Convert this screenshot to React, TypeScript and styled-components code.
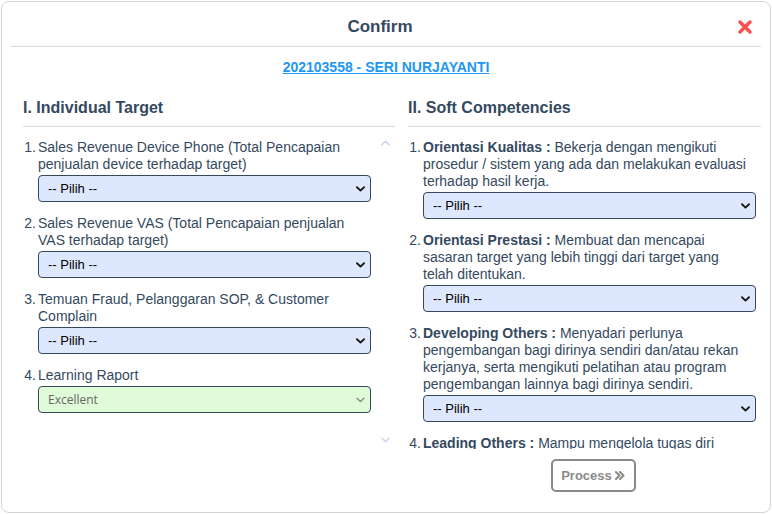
import React from 'react';
import styled, { createGlobalStyle } from 'styled-components';

const GlobalStyle = createGlobalStyle`
  html, body {
    margin: 0;
    padding: 0;
    background: #ffffff;
    font-family: "Liberation Sans", Arial, sans-serif;
  }
  #root {
    padding: 1px;
  }
`;

const Modal = styled.div`
  box-sizing: border-box;
  width: 770px;
  height: 512px;
  border: 1px solid #d4d4d4;
  border-radius: 8px;
  background: #fff;
  display: flex;
  flex-direction: column;
`;

const Header = styled.div`
  position: relative;
  margin: 0 9px;
  padding: 15px 0 9px;
  border-bottom: 1px solid #dcdcdc;
`;

const Title = styled.div`
  padding-right: 12px;
  text-align: center;
  font-size: 17px;
  line-height: 20px;
  font-weight: bold;
  color: #34495e;
`;

// sits over the header's right end
const CloseButton = styled.button`
  position: absolute;
  right: 9px;
  top: 18px;
  padding: 0;
  border: 0;
  background: none;
  width: 14px;
  height: 14px;
  display: flex;
  cursor: pointer;
`;

const EmployeeLink = styled.a`
  margin-top: 12px;
  align-self: center;
  font-size: 14px;
  line-height: 16px;
  font-weight: bold;
  color: #2196f3;
  text-decoration: underline;
  cursor: pointer;
`;

const Body = styled.div`
  display: grid;
  grid-template-columns: 372px 353px;
  column-gap: 13px;
  padding-left: 21px;
  margin-top: 24px;
`;

const Column = styled.div`
  display: flex;
  flex-direction: column;
`;

const SectionTitle = styled.h3`
  margin: 0;
  padding-bottom: 9px;
  border-bottom: 1px solid #dcdcdc;
  font-size: 16px;
  line-height: 18px;
  font-weight: bold;
  color: #34495e;
`;

const List = styled.div`
  position: relative;
  box-sizing: border-box;
  height: 322px;
  padding-top: 12px;
  overflow: hidden;
`;

const Item = styled.div`
  display: flex;
  margin-bottom: 13px;
  font-size: 14px;
  line-height: 17px;
  color: #34495e;
`;

const Num = styled.span`
  box-sizing: border-box;
  flex: 0 0 15px;
  padding-right: 2px;
  text-align: right;
`;

const ItemBody = styled.div`
  width: 333px;
`;

const ItemText = styled.div`
  padding-right: 8px;
`;

const Label = styled.b`
  font-weight: bold;
`;

const SelectWrap = styled.div`
  position: relative;
  margin-top: 2px;
`;

const Select = styled.select<{ $done?: boolean }>`
  box-sizing: border-box;
  display: block;
  width: 100%;
  height: 27px;
  padding: 0 20px 0 9px;
  appearance: none;
  -webkit-appearance: none;
  border: 1px solid #34495e;
  border-radius: 4px;
  background-color: ${(p) => (p.$done ? '#e0fbd8' : '#dde7fd')};
  color: ${(p) => (p.$done ? '#666666' : '#000000')};
  font-family: ${(p) => (p.$done ? '"Open Sans", sans-serif' : '"Liberation Sans", Arial, sans-serif')};
  font-size: ${(p) => (p.$done ? '12px' : '13px')};
  opacity: 1;
  outline: none;
`;

// the select's own arrow, drawn over its right end
const SelectArrow = styled.span`
  position: absolute;
  right: 6px;
  top: 11px;
  width: 9px;
  height: 6px;
  display: flex;
  pointer-events: none;
`;

const ScrollArrow = styled.span<{ $down?: boolean }>`
  position: absolute;
  left: 358px;
  ${(p) => (p.$down ? 'top: 310px;' : 'top: 13px;')}
  width: 9px;
  height: 6px;
  display: flex;
`;

const Footer = styled.div`
  display: flex;
  justify-content: center;
  padding: 10px 0 0 18px;
`;

const ProcessButton = styled.button`
  display: flex;
  align-items: center;
  gap: 3px;
  height: 33px;
  padding: 0 9px 0 8px;
  border: 2px solid #8a8a8a;
  border-radius: 5px;
  background: #fff;
  color: #8a8a8a;
  font-family: "Liberation Sans", Arial, sans-serif;
  font-size: 13px;
  font-weight: bold;
  cursor: pointer;
`;

type Entry = { label?: string; text: string; done?: boolean };

const targets: Entry[] = [
  { text: 'Sales Revenue Device Phone (Total Pencapaian penjualan device terhadap target)' },
  { text: 'Sales Revenue VAS (Total Pencapaian penjualan VAS terhadap target)' },
  { text: 'Temuan Fraud, Pelanggaran SOP, & Customer Complain' },
  { text: 'Learning Raport', done: true },
];

const competencies: Entry[] = [
  {
    label: 'Orientasi Kualitas :',
    text: 'Bekerja dengan mengikuti prosedur / sistem yang ada dan melakukan evaluasi terhadap hasil kerja.',
  },
  {
    label: 'Orientasi Prestasi :',
    text: 'Membuat dan mencapai sasaran target yang lebih tinggi dari target yang telah ditentukan.',
  },
  {
    label: 'Developing Others :',
    text: 'Menyadari perlunya pengembangan bagi dirinya sendiri dan/atau rekan kerjanya, serta mengikuti pelatihan atau program pengembangan lainnya bagi dirinya sendiri.',
  },
  {
    label: 'Leading Others :',
    text: 'Mampu mengelola tugas diri sendiri dan mengarahkan anggota tim untuk mencapai target bersama.',
  },
];

const Chevron = ({ down, color, width }: { down?: boolean; color: string; width: number }) => (
  <svg width="9" height="6" viewBox="0 0 9 6">
    <path
      d={down ? 'M1 1.2 L4.5 4.6 L8 1.2' : 'M1 4.6 L4.5 1.2 L8 4.6'}
      fill="none"
      stroke={color}
      strokeWidth={width}
      strokeLinecap="round"
      strokeLinejoin="round"
    />
  </svg>
);

const Rows = ({ items }: { items: Entry[] }) => (
  <>
    {items.map((it, i) => (
      <Item key={i}>
        <Num>{i + 1}.</Num>
        <ItemBody>
          <ItemText>
            {it.label && <Label>{it.label}</Label>} {it.text}
          </ItemText>
          <SelectWrap>
            {it.done ? (
              <Select $done disabled defaultValue="excellent">
                <option value="excellent">Excellent</option>
              </Select>
            ) : (
              <Select defaultValue="">
                <option value="">-- Pilih --</option>
                <option value="1">Excellent</option>
                <option value="2">Good</option>
                <option value="3">Poor</option>
              </Select>
            )}
            <SelectArrow>
              <Chevron down color={it.done ? '#8c8c8c' : '#1a1a1a'} width={it.done ? 1.4 : 1.9} />
            </SelectArrow>
          </SelectWrap>
        </ItemBody>
      </Item>
    ))}
  </>
);

function App() {
  return (
    <>
      <GlobalStyle />
      <Modal>
        <Header>
          <Title>Confirm</Title>
          <CloseButton aria-label="close">
            <svg width="14" height="14" viewBox="0 0 14 14">
              <path d="M2 2 L12 12 M12 2 L2 12" stroke="#ff4d4d" strokeWidth="3.4" strokeLinecap="round" />
            </svg>
          </CloseButton>
        </Header>
        <EmployeeLink>202103558 - SERI NURJAYANTI</EmployeeLink>
        <Body>
          <Column>
            <SectionTitle>I. Individual Target</SectionTitle>
            <List>
              <Rows items={targets} />
              <ScrollArrow>
                <Chevron color="#c9d8f2" width={1.6} />
              </ScrollArrow>
              <ScrollArrow $down>
                <Chevron down color="#c9d8f2" width={1.6} />
              </ScrollArrow>
            </List>
          </Column>
          <Column>
            <SectionTitle>II. Soft Competencies</SectionTitle>
            <List>
              <Rows items={competencies} />
            </List>
            <Footer>
              <ProcessButton>
                Process
                <svg width="10" height="9" viewBox="0 0 10 9">
                  <path
                    d="M1 1 L4.5 4.5 L1 8 M5 1 L8.5 4.5 L5 8"
                    fill="none"
                    stroke="#8a8a8a"
                    strokeWidth="2"
                    strokeLinecap="round"
                    strokeLinejoin="round"
                  />
                </svg>
              </ProcessButton>
            </Footer>
          </Column>
        </Body>
      </Modal>
    </>
  );
}

export default App;
